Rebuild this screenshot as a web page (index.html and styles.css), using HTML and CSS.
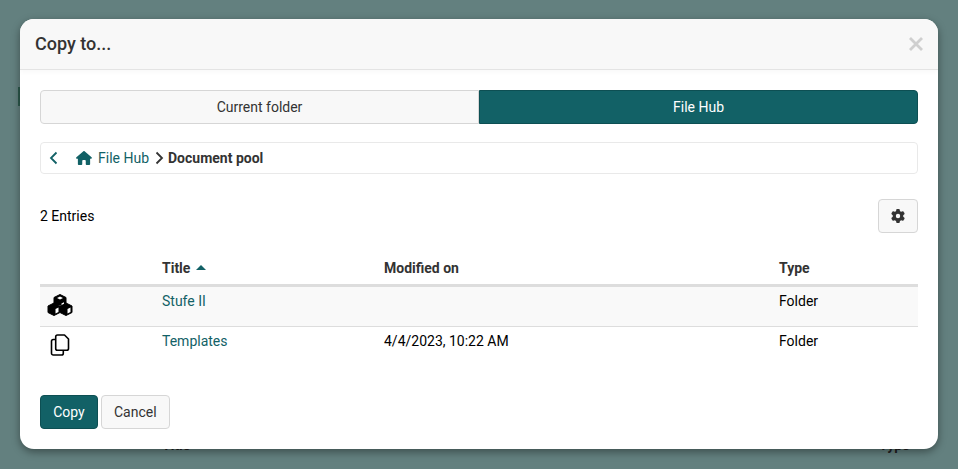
FILE: index.html
```html
<!DOCTYPE html>
<html lang="en">
<head>
<meta charset="utf-8">
<title>Copy to...</title>
<link rel="stylesheet" href="styles.css">
</head>
<body>
<div class="backdrop" aria-hidden="true">
  <span class="peek peek-bar"></span>
  <span class="peek peek-title">Title</span>
  <span class="peek peek-type">Type</span>
</div>
<div class="modal">
  <header class="modal-header">
    <h1 class="modal-title">Copy to...</h1>
    <svg class="close" viewBox="0 0 14 14" aria-label="Close"><path d="M1 1 13 13M13 1 1 13"/></svg>
  </header>
  <div class="modal-body">
    <div class="tabs">
      <button class="tab">Current folder</button>
      <button class="tab tab-active">File Hub</button>
    </div>
    <nav class="crumbs">
      <svg class="crumb-back" viewBox="0 0 10 14"><path d="M7.5 1.5 2 7l5.5 5.5"/></svg>
      <svg class="crumb-home" viewBox="0 0 576 512"><path d="M575.8 255.5c0 18-15 32.1-32 32.1h-32l.7 160.2c0 2.700-.2 5.400-.5 8.100V472c0 22.100-17.900 40-40 40H456c-1.100 0-2.200 0-3.300-.1-1.400.1-2.800.1-4.200.1H392c-22.100 0-40-17.900-40-40V360c0-17.700-14.300-32-32-32h-64c-17.700 0-32 14.300-32 32v112c0 22.100-17.900 40-40 40H104c-22.100 0-40-17.900-40-40V287.600H32c-18 0-32-14-32-32.100 0-9 3-17 10-24L266.400 8c7-7 15-8 22-8s15 2 21 7l255.400 224.500c8 7 12 15 11 24z"/></svg>
      <a class="link crumb-link">File Hub</a>
      <svg class="crumb-sep" viewBox="0 0 10 14"><path d="M2.500 1.500 8 7l-5.500 5.500"/></svg>
      <strong class="crumb-current">Document pool</strong>
    </nav>
    <div class="toolbar">
      <span class="entries">2 Entries</span>
      <button class="gear-btn" aria-label="Settings">
        <svg class="gear" viewBox="0 0 512 512"><path d="M495.900 166.600c3.200 8.700.5 18.400-6.400 24.600l-43.300 39.400c1.100 8.300 1.700 16.800 1.700 25.400s-.6 17.100-1.700 25.400l43.300 39.400c6.900 6.200 9.600 15.900 6.400 24.600-4.400 11.900-9.700 23.300-15.800 34.300l-4.700 8.100c-6.600 11-14 21.400-22.100 31.200-5.900 7.200-15.700 9.600-24.500 6.800l-55.700-17.700c-13.400 10.300-28.200 18.900-44 25.400l-12.500 57.100c-2 9.100-9 16.300-18.200 17.800-13.800 2.300-28 3.500-42.500 3.500s-28.700-1.200-42.500-3.500c-9.200-1.500-16.200-8.700-18.200-17.800l-12.500-57.100c-15.800-6.500-30.600-15.100-44-25.400l-55.600 17.800c-8.800 2.800-18.600.3-24.500-6.800-8.100-9.800-15.500-20.200-22.100-31.200l-4.700-8.100c-6.100-11-11.400-22.400-15.800-34.300-3.200-8.700-.5-18.400 6.400-24.600l43.300-39.400C64.600 273.100 64 264.600 64 256s.6-17.100 1.700-25.400l-43.300-39.400c-6.900-6.200-9.600-15.900-6.400-24.600 4.400-11.900 9.700-23.300 15.800-34.300l4.700-8.100c6.600-11 14-21.400 22.100-31.200 5.900-7.200 15.700-9.600 24.500-6.800l55.700 17.700c13.400-10.300 28.200-18.900 44-25.400l12.500-57.100c2-9.100 9-16.300 18.200-17.800C227.300 1.200 241.500 0 256 0s28.700 1.200 42.500 3.500c9.200 1.500 16.200 8.700 18.200 17.800l12.500 57.100c15.800 6.500 30.600 15.100 44 25.400l55.700-17.700c8.800-2.800 18.600-.3 24.500 6.800 8.100 9.800 15.500 20.200 22.100 31.200l4.700 8.100c6.100 11 11.400 22.400 15.800 34.300zM256 336a80 80 0 1 0 0-160 80 80 0 1 0 0 160z"/></svg>
      </button>
    </div>
    <table class="entries-table">
      <colgroup>
        <col class="col-icon"><col class="col-title"><col class="col-mod"><col>
      </colgroup>
      <thead>
        <tr>
          <th></th>
          <th>Title <span class="sort-caret"></span></th>
          <th>Modified on</th>
          <th>Type</th>
        </tr>
      </thead>
      <tbody>
        <tr class="row-odd">
          <td class="icon-cell">
            <svg class="row-icon" viewBox="0 0 26 24"><path class="cube-solid" d="M13 1.500 19 4.500V11.500H7V4.500Z"/><path class="cube-solid" d="M7 10 13 13 19 10 25 13V19.500L19 22.500 13 19.500 7 22.500 1 19.500V13Z"/><path class="cube-cut" d="M13 3.500 16 5 13 6.500 10 5ZM8.500 16 11.500 14.500V19L8.500 20.500ZM20.500 16 23.500 14.500V19L20.500 20.500ZM14.500 10.500 17 9.300V10.800L14.500 12Z"/></svg>
          </td>
          <td><a class="link">Stufe II</a></td>
          <td></td>
          <td>Folder</td>
        </tr>
        <tr>
          <td class="icon-cell">
            <svg class="row-icon" viewBox="0 0 26 24"><path class="copy-line" d="M10.500 2H17.500L21.500 6V15.500A1.800 1.800 0 0 1 19.700 17.300H10.500A1.800 1.800 0 0 1 8.700 15.500V3.800A1.800 1.800 0 0 1 10.500 2Z"/><path class="copy-line" d="M8.700 6.500H6.300A1.800 1.800 0 0 0 4.500 8.300V20.200A1.800 1.800 0 0 0 6.300 22H14.500A1.800 1.800 0 0 0 16.300 20.200V17.300"/></svg>
          </td>
          <td><a class="link">Templates</a></td>
          <td>4/4/2023, 10:22 AM</td>
          <td>Folder</td>
        </tr>
      </tbody>
    </table>
    <div class="actions">
      <button class="btn btn-primary">Copy</button>
      <button class="btn">Cancel</button>
    </div>
  </div>
</div>
</body>
</html>
```
FILE: styles.css
```css
* { box-sizing: border-box; }
html, body { height: 100%; }
body {
  margin: 0;
  background: #63807f;
  font-family: Roboto, "Liberation Sans", sans-serif;
  font-size: 14px;
  line-height: 20px;
  color: #000;
  overflow: hidden;
  padding: 19px 20px 0;
}
.backdrop { position: absolute; inset: 0; }
.peek { position: absolute; }
.peek-bar { left: 18px; top: 87px; width: 2px; height: 19px; background: #2c5a4c; }
.peek-title { left: 162px; top: 435px; font-weight: 700; color: #222; }
.peek-type { left: 879px; top: 435px; font-weight: 700; color: #222; }
.modal {
  position: relative;
  width: 918px;
  height: 430px;
  background: #fff;
  border-radius: 14px;
  overflow: hidden;
  box-shadow: 0 3px 8px rgba(0, 0, 0, .4);
}
.modal-header {
  height: 51px;
  padding: 0 15px;
  display: flex;
  align-items: center;
  justify-content: space-between;
  background: #f8f8f8;
  border-bottom: 1px solid #e4e4e4;
  box-shadow: 0 2px 5px rgba(0, 0, 0, .03);
}
.modal-title {
  margin: 0;
  font-size: 18px;
  font-weight: 500;
  color: #333;
}
.close { width: 14px; height: 14px; margin-bottom: 1px; }
.close path { fill: none; stroke: #cfcfcf; stroke-width: 2.800; }
.modal-body { padding: 20px; }
.tabs { display: flex; height: 34px; }
.tab {
  flex: 1;
  font: inherit;
  color: #333;
  background: #f8f8f8;
  border: 1px solid #d6d6d6;
  border-radius: 4px 0 0 4px;
  padding: 0;
}
.tab-active {
  color: #fff;
  background: #126166;
  border-color: #0d4f53;
  border-radius: 0 4px 4px 0;
}
.crumbs {
  margin-top: 18px;
  height: 32px;
  padding: 0 8px;
  display: flex;
  align-items: center;
  border: 1px solid #e9e9e9;
  border-radius: 4px;
}
.crumb-back, .crumb-sep { width: 10px; height: 14px; flex: none; }
.crumb-back path { fill: none; stroke: #126166; stroke-width: 1.800; }
.crumb-sep path { fill: none; stroke: #333; stroke-width: 1.800; }
.crumb-home { width: 16px; height: 14px; margin-left: 17px; fill: #126166; flex: none; }
.crumb-link { margin-left: 6px; }
.crumb-sep { margin-left: 5px; }
.crumb-current { margin-left: 4px; font-weight: 700; color: #333; }
.link { color: #126166; }
.toolbar {
  margin-top: 25px;
  height: 34px;
  display: flex;
  align-items: center;
  justify-content: space-between;
}
.gear-btn {
  width: 40px;
  height: 34px;
  padding: 0;
  display: flex;
  align-items: center;
  justify-content: center;
  background: #f8f8f8;
  border: 1px solid #d6d6d6;
  border-radius: 4px;
}
.gear { width: 14px; height: 14px; fill: #333; }
.entries-table {
  margin-top: 17px;
  width: 878px;
  table-layout: fixed;
  border-collapse: collapse;
}
.col-icon { width: 114px; }
.col-title { width: 222px; }
.col-mod { width: 395px; }
.entries-table th {
  height: 35px;
  padding: 8px 8px 6px;
  text-align: left;
  font-weight: 700;
  color: #333;
  border-bottom: 3px solid #ddd;
}
.entries-table td {
  height: 41px;
  padding: 4px 8px 0;
  vertical-align: top;
  border-bottom: 1px solid #ddd;
}
.entries-table tbody tr:last-child td { border-bottom: 0; }
.row-odd { background: #f9f9f9; }
.entries-table td.icon-cell { padding: 6px 0 0 7px; }
.row-icon { display: block; width: 26px; height: 24px; }
.cube-solid { fill: #000; stroke: #000; stroke-width: 1; stroke-linejoin: round; }
.cube-cut { fill: #fff; }
.copy-line { fill: none; stroke: #000; stroke-width: 1.600; stroke-linejoin: round; }
.sort-caret {
  display: inline-block;
  vertical-align: 3px;
  margin-left: 2px;
  border-left: 5px solid transparent;
  border-right: 5px solid transparent;
  border-bottom: 5px solid #126166;
}
.actions { margin-top: 27px; display: flex; gap: 3px; }
.btn {
  height: 34px;
  padding: 0 12px;
  font: inherit;
  color: #333;
  background: #f8f8f8;
  border: 1px solid #d6d6d6;
  border-radius: 4px;
}
.btn-primary { width: 58px; color: #fff; background: #126166; border-color: #0d4f53; }
```
